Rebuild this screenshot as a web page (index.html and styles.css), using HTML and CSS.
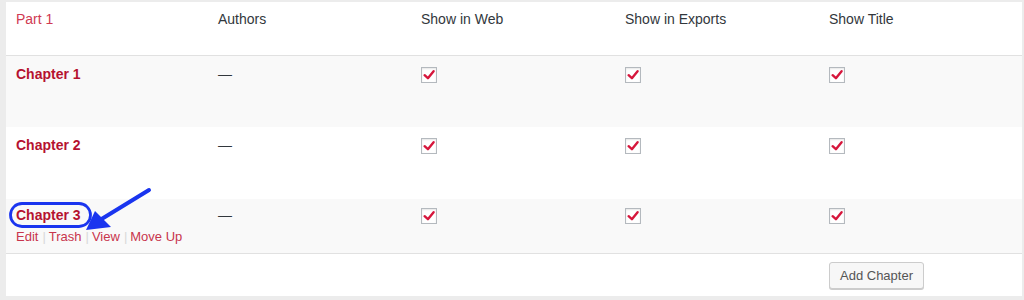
FILE: index.html
```html
<!DOCTYPE html>
<html>
<head>
<meta charset="utf-8">
<link rel="stylesheet" href="styles.css">
</head>
<body>
<div class="page">
  <table class="chapters">
    <colgroup>
      <col class="c1"><col class="c2"><col class="c3"><col class="c4"><col class="c5">
    </colgroup>
    <thead>
      <tr class="head">
        <th class="part">Part 1</th>
        <th>Authors</th>
        <th>Show in Web</th>
        <th>Show in Exports</th>
        <th>Show Title</th>
      </tr>
    </thead>
    <tbody>
      <tr class="row alt tall">
        <td><a class="title">Chapter 1</a></td>
        <td class="dash">—</td>
        <td><span class="cb"><svg viewBox="0 0 16 16" width="16" height="16"><path d="M3.6 8.2 L6.9 11.2 L12.6 4.3" fill="none" stroke="#d6163c" stroke-width="2.4" stroke-linecap="round" stroke-linejoin="round"/></svg></span></td>
        <td><span class="cb"><svg viewBox="0 0 16 16" width="16" height="16"><path d="M3.6 8.2 L6.9 11.2 L12.6 4.3" fill="none" stroke="#d6163c" stroke-width="2.4" stroke-linecap="round" stroke-linejoin="round"/></svg></span></td>
        <td><span class="cb"><svg viewBox="0 0 16 16" width="16" height="16"><path d="M3.6 8.2 L6.9 11.2 L12.6 4.3" fill="none" stroke="#d6163c" stroke-width="2.4" stroke-linecap="round" stroke-linejoin="round"/></svg></span></td>
      </tr>
      <tr class="row tall">
        <td><a class="title">Chapter 2</a></td>
        <td class="dash">—</td>
        <td><span class="cb"><svg viewBox="0 0 16 16" width="16" height="16"><path d="M3.6 8.2 L6.9 11.2 L12.6 4.3" fill="none" stroke="#d6163c" stroke-width="2.4" stroke-linecap="round" stroke-linejoin="round"/></svg></span></td>
        <td><span class="cb"><svg viewBox="0 0 16 16" width="16" height="16"><path d="M3.6 8.2 L6.9 11.2 L12.6 4.3" fill="none" stroke="#d6163c" stroke-width="2.4" stroke-linecap="round" stroke-linejoin="round"/></svg></span></td>
        <td><span class="cb"><svg viewBox="0 0 16 16" width="16" height="16"><path d="M3.6 8.2 L6.9 11.2 L12.6 4.3" fill="none" stroke="#d6163c" stroke-width="2.4" stroke-linecap="round" stroke-linejoin="round"/></svg></span></td>
      </tr>
      <tr class="row alt short">
        <td>
          <a class="title">Chapter 3</a>
          <div class="actions"><a>Edit</a><span class="sep">|</span><a>Trash</a><span class="sep">|</span><a>View</a><span class="sep">|</span><a>Move Up</a></div>
        </td>
        <td class="dash">—</td>
        <td><span class="cb"><svg viewBox="0 0 16 16" width="16" height="16"><path d="M3.6 8.2 L6.9 11.2 L12.6 4.3" fill="none" stroke="#d6163c" stroke-width="2.4" stroke-linecap="round" stroke-linejoin="round"/></svg></span></td>
        <td><span class="cb"><svg viewBox="0 0 16 16" width="16" height="16"><path d="M3.6 8.2 L6.9 11.2 L12.6 4.3" fill="none" stroke="#d6163c" stroke-width="2.4" stroke-linecap="round" stroke-linejoin="round"/></svg></span></td>
        <td><span class="cb"><svg viewBox="0 0 16 16" width="16" height="16"><path d="M3.6 8.2 L6.9 11.2 L12.6 4.3" fill="none" stroke="#d6163c" stroke-width="2.4" stroke-linecap="round" stroke-linejoin="round"/></svg></span></td>
      </tr>
    </tbody>
    <tfoot>
      <tr class="foot">
        <td></td><td></td><td></td><td></td>
        <td><button class="add">Add Chapter</button></td>
      </tr>
    </tfoot>
  </table>
  <svg class="annot" width="1024" height="300" viewBox="0 0 1024 300">
    <rect x="10.5" y="203.5" width="80" height="23" rx="11.5" ry="11.5" fill="none" stroke="#1a35ef" stroke-width="2.8"/>
    <line x1="149" y1="190" x2="100" y2="220" stroke="#1a35ef" stroke-width="4" stroke-linecap="round"/>
    <polygon points="86,230 95,211 111,227" fill="#1a35ef"/>
  </svg>
</div>
</body>
</html>
```

FILE: styles.css
```css
html, body {
  margin: 0;
  padding: 0;
  background: #ececec;
}
.page {
  position: relative;
  width: 1024px;
  height: 300px;
  padding: 2px 2px 0 6px;
  box-sizing: border-box;
}
.chapters {
  width: 1016px;
  border-collapse: collapse;
  table-layout: fixed;
  background: #fff;
  font-family: "Liberation Sans", Arial, sans-serif;
  font-size: 14px;
  color: #32373c;
}
.c1 { width: 202px; }
.c2 { width: 203px; }
.c3 { width: 204px; }
.c4 { width: 204px; }
.c5 { width: 203px; }
th, td {
  text-align: left;
  vertical-align: top;
  padding: 0 0 0 10px;
  font-weight: normal;
}
.head th {
  height: 53px;
  padding-top: 7px;
  box-sizing: border-box;
  border-bottom: 1px solid #e1e1e1;
  line-height: 20px;
}
.head .part { color: #d03a52; }
.row td {
  padding-top: 8px;
  line-height: 20px;
  box-sizing: border-box;
}
.row.tall td { height: 72px; }
.row.short td { height: 54px; padding-top: 6px; }
.row.short { border-bottom: 1px solid #e1e1e1; }
.alt { background: #f9f9f9; }
.title {
  color: #b5122f;
  font-weight: bold;
}
.dash { color: #32373c; }
.cb {
  display: inline-block;
  width: 16px;
  height: 16px;
  margin-top: 3px;
  border: 1px solid #b4b9be;
  box-sizing: border-box;
  background: #fff;
  box-shadow: inset 0 1px 2px rgba(0,0,0,0.1);
  position: relative;
  vertical-align: top;
}
.cb svg {
  position: absolute;
  left: -1px;
  top: -1px;
}
.row.short .cb { margin-top: 3px; }
.actions {
  margin-top: 3px;
  font-size: 13px;
  line-height: 18px;
}
.actions a { color: #c8354d; }
.sep {
  color: #d8d8d8;
  margin: 0 3px 0 4px;
}
.foot td {
  height: 43px;
  padding-top: 8px;
  box-sizing: border-box;
  vertical-align: top;
}
.add {
  font-family: "Liberation Sans", Arial, sans-serif;
  font-size: 13px;
  color: #555;
  background: #f7f7f7;
  border: 1px solid #cccccc;
  border-radius: 3px;
  box-shadow: 0 1px 0 #ccc;
  height: 27px;
  padding: 0 10px;
  margin-left: 0;
}
.annot {
  position: absolute;
  left: 0;
  top: 0;
  pointer-events: none;
}
```
